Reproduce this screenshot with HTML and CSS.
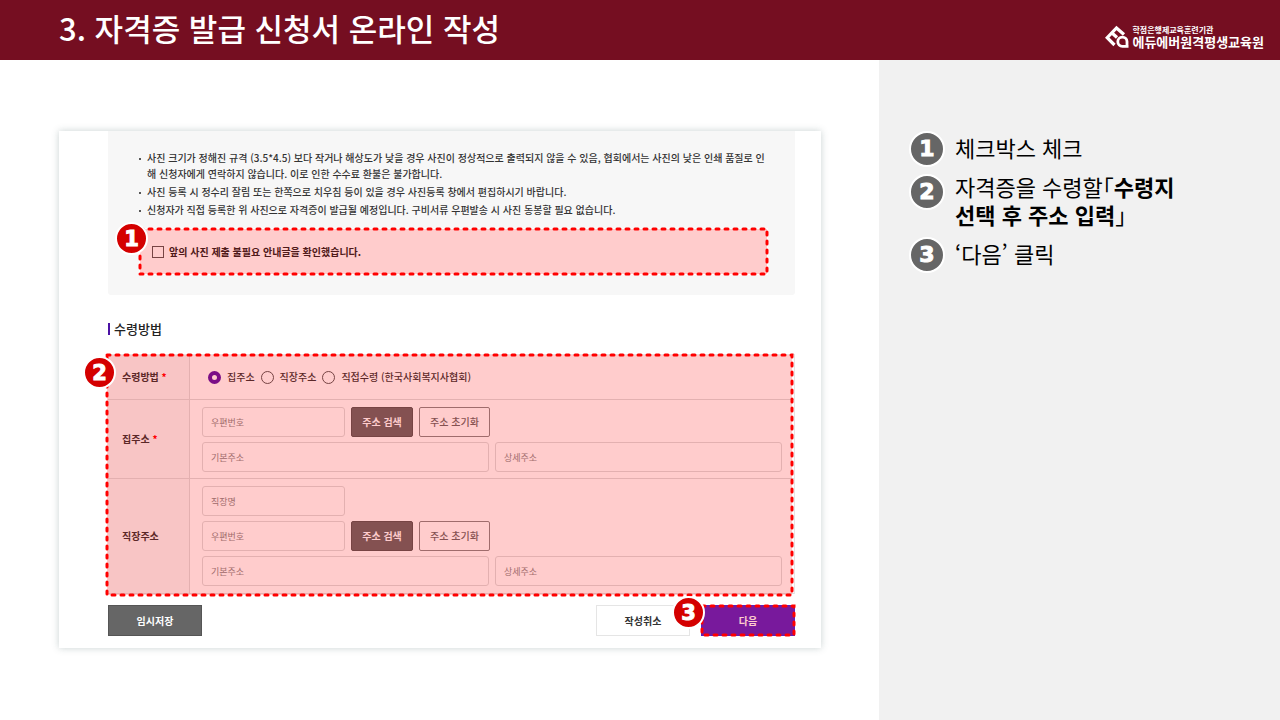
FILE: index.html
```html
<!DOCTYPE html>
<html lang="ko">
<head>
<meta charset="utf-8">
<meta name="viewport" content="width=device-width, initial-scale=1">
<title>자격증 발급 신청서 온라인 작성</title>
<link rel="stylesheet" href="styles.css">
</head>
<body>
<header class="topbar">
  <h1 class="title">3. 자격증 발급 신청서 온라인 작성</h1>
  <div class="brand">
    <svg class="brand-mark" viewBox="0 0 24 24" aria-hidden="true">
      <path d="M9.500 20 L2.200 12.700 L11.500 3 L19 9.500 M7 8 L12 12.500" fill="none" stroke="#fff" stroke-width="3.200"/>
      <path d="M22 22 V16.500 A4.600 4.600 0 1 0 17.400 21.300 H23.500" fill="none" stroke="#fff" stroke-width="2.800"/>
    </svg>
    <p class="brand-text"><span class="brand-sub">학점은행제교육훈련기관</span><span class="brand-name">에듀에버원격평생교육원</span></p>
  </div>
</header>
<div class="layout">
  <main class="stage">
    <form class="card">
      <section class="notice">
        <ul class="notes">
          <li>사진 크기가 정해진 규격 (3.5*4.5) 보다 작거나 해상도가 낮을 경우 사진이 정상적으로 출력되지 않을 수 있음, 협회에서는 사진의 낮은 인쇄 품질로 인해 신청자에게 연락하지 않습니다. 이로 인한 수수료 환불은 불가합니다.</li>
          <li>사진 등록 시 정수리 잘림 또는 한쪽으로 치우침 등이 있을 경우 사진등록 창에서 편집하시기 바랍니다.</li>
          <li>신청자가 직접 등록한 위 사진으로 자격증이 발급될 예정입니다. 구비서류 우편발송 시 사진 동봉할 필요 없습니다.</li>
        </ul>
        <div class="marked confirm">
          <input type="checkbox" id="agree" class="check"><label for="agree">앞의 사진 제출 불필요 안내글을 확인했습니다.</label>
          <svg class="outline" aria-hidden="true"><rect/></svg>
          <span class="badge badge-confirm">1</span>
        </div>
      </section>
      <h2 class="section-title">수령방법</h2>
      <div class="marked marked-table">
        <table class="fields">
          <tr>
            <th scope="row">수령방법 <span class="req">*</span></th>
            <td>
              <div class="radios">
                <input type="radio" name="way" id="home" checked><label for="home">집주소</label>
                <input type="radio" name="way" id="work"><label for="work">직장주소</label>
                <input type="radio" name="way" id="visit"><label for="visit">직접수령 (한국사회복지사협회)</label>
              </div>
            </td>
          </tr>
          <tr>
            <th scope="row">집주소 <span class="req">*</span></th>
            <td>
              <div class="stack">
                <div class="line"><input class="field short" type="text" placeholder="우편번호" aria-label="집 우편번호"><button type="button" class="btn-search">주소 검색</button><button type="button" class="btn-reset">주소 초기화</button></div>
                <div class="line"><input class="field" type="text" placeholder="기본주소" aria-label="집 기본주소"><input class="field" type="text" placeholder="상세주소" aria-label="집 상세주소"></div>
              </div>
            </td>
          </tr>
          <tr>
            <th scope="row">직장주소</th>
            <td>
              <div class="stack">
                <div class="line"><input class="field short" type="text" placeholder="직장명" aria-label="직장명"></div>
                <div class="line"><input class="field short" type="text" placeholder="우편번호" aria-label="직장 우편번호"><button type="button" class="btn-search">주소 검색</button><button type="button" class="btn-reset">주소 초기화</button></div>
                <div class="line"><input class="field" type="text" placeholder="기본주소" aria-label="직장 기본주소"><input class="field" type="text" placeholder="상세주소" aria-label="직장 상세주소"></div>
              </div>
            </td>
          </tr>
        </table>
        <svg class="outline outline-table" aria-hidden="true"><rect/></svg>
        <span class="badge badge-table">2</span>
      </div>
      <div class="actions">
        <button type="button" class="action save">임시저장</button>
        <button type="button" class="action cancel">작성취소</button>
        <div class="marked">
          <button type="submit" class="action next">다음</button>
          <svg class="outline" aria-hidden="true"><rect/></svg>
          <span class="badge badge-next">3</span>
        </div>
      </div>
    </form>
  </main>
  <aside class="guide">
    <ol class="steps">
      <li><span class="num">1</span><p>체크박스 체크</p></li>
      <li class="tall"><span class="num">2</span><p>자격증을 수령할「<b>수령지<br>선택 후 주소 입력</b>」</p></li>
      <li><span class="num">3</span><p>‘다음’ 클릭</p></li>
    </ol>
  </aside>
</div>
</body>
</html>
```
FILE: styles.css
```css
* { box-sizing: border-box; }
body {
  margin: 0;
  min-height: 100vh;
  display: flex;
  flex-direction: column;
  background: #fff;
  color: #333;
  font: 500 10px/16px "Noto Sans CJK KR", sans-serif;
}
h1, h2, p, ul, ol { margin: 0; padding: 0; }
ul, ol { list-style: none; }
input, button { font: inherit; margin: 0; }

.topbar {
  display: flex;
  align-items: flex-start;
  justify-content: space-between;
  height: 60px;
  padding: 0 16px 0 59px;
  background: #750e21;
  color: #fff;
}
.title { font-size: 31px; font-weight: 500; line-height: 56px; }
.brand { display: flex; align-items: center; gap: 3px; padding-top: 25px; }
.brand-mark { width: 24px; height: 24px; }
.brand-text { display: flex; flex-direction: column; font-weight: 700; }
.brand-sub { font-size: 8px; line-height: 10px; }
.brand-name { font-size: 13px; line-height: 14px; }

.layout { flex: 1; display: grid; grid-template-columns: 879fr 401fr; }
.stage { padding: 71px 58px 72px 59px; }
.card {
  padding: 0 26px 12px 49px;
  background: #fff;
  box-shadow: 0 0 7px rgba(60, 90, 90, .28);
}

.notice { padding: 19px 27px 20px 31px; background: #f7f7f7; border-radius: 0 0 3px 3px; }
.notes { display: grid; gap: 2px; padding-left: 8px; }
.notes li { position: relative; }
.notes li::before {
  content: "";
  position: absolute;
  left: -8px;
  top: 8px;
  width: 2px;
  height: 2px;
  border-radius: 50%;
  background: #222;
}

.marked { position: relative; }
.marked-table { padding-bottom: 2px; }
.outline {
  position: absolute;
  inset: 0;
  width: 100%;
  height: 100%;
  overflow: visible;
  pointer-events: none;
}
.outline rect {
  x: 1px;
  y: 1px;
  width: calc(100% - 2px);
  height: calc(100% - 2px);
  fill: rgba(255, 0, 0, .2);
  stroke: #f00;
  stroke-width: 3px;
  stroke-linecap: round;
  stroke-dasharray: 3 6;
}
.outline-table { left: -2px; }
.badge, .num {
  display: flex;
  align-items: center;
  justify-content: center;
  border: 2px solid #fff;
  border-radius: 50%;
  color: #fff;
  font-family: "DejaVu Sans", sans-serif;
  font-weight: 700;
  -webkit-text-stroke: 1px #fff;
}
.badge { position: absolute; width: 33px; height: 33px; background: #d40000; font-size: 21px; }
.badge-confirm { left: -24px; top: -6px; }
.badge-table { left: -25px; top: 2px; }
.badge-next { left: -29px; top: -9px; }

.confirm {
  display: flex;
  align-items: center;
  gap: 5px;
  height: 47px;
  margin-top: 10px;
  padding-left: 13px;
  background: #fff;
  color: #222;
  font-weight: 700;
}
.check { appearance: none; width: 12px; height: 12px; border: 1px solid #555; background: #fff; }

.section-title {
  margin: 24px 0 15px;
  display: flex;
  align-items: center;
  gap: 4px;
  color: #222;
  font-size: 13px;
  font-weight: 500;
  line-height: 20px;
}
.section-title::before { content: ""; width: 2px; height: 12px; background: #4b12a5; }

.fields { width: 100%; border-collapse: separate; border-spacing: 0; border: 1px solid #e5e5e5; border-width: 1px 1px 0 0; }
.fields th, .fields td { border-bottom: 1px solid #ddd; padding: 7px 12px 6px; }
.fields th { width: 82px; padding: 0 0 0 14px; border-right: 1px solid #ddd; background: #f7f7f7; text-align: left; font-weight: 700; }
.fields tr:first-child td { height: 45px; padding: 0 18px; }
.fields tr:last-child td { padding-bottom: 7px; }
.req { color: #f00; }
.radios, .line { display: flex; align-items: center; gap: 6px; }
.radios input { appearance: none; width: 13px; height: 13px; border: 1px solid #555; border-radius: 50%; background: #fff; }
.radios input:checked { border: 4px solid #5a12a8; }
.stack { display: grid; gap: 5px; }
.field {
  flex: 1;
  min-width: 0;
  height: 30px;
  padding: 0 8px;
  border: 1px solid #ddd;
  border-radius: 3px;
  background: #fff;
  font-size: 9px;
  font-weight: 400;
}
.field::placeholder { color: #888; opacity: 1; }
.short { flex: 0 0 143px; }
.btn-search, .btn-reset { height: 30px; padding: 0; border: 1px solid #888; border-radius: 2px; }
.btn-search { width: 62px; background: #666; border-color: #555; color: #fff; font-weight: 700; }
.btn-reset { width: 71px; background: #fff; color: #666; }

.actions { display: flex; gap: 11px; margin-top: 9px; }
.action { display: block; width: 94px; height: 31px; padding: 0; border: 1px solid #555; background: #666; color: #fff; font-weight: 700; }
.save { margin-right: auto; }
.cancel { border-color: #e5e5e5; background: #fff; color: #333; }
.next { border: 0; background: #5720c4; }

.guide { padding: 71px 30px 0; background: #f1f1f1; color: #000; }
.steps { display: grid; gap: 5px; }
.steps li { display: flex; align-items: center; gap: 10px; }
.steps p { padding-bottom: 4px; font-size: 22px; font-weight: 400; line-height: 28px; font-feature-settings: "halt"; }
.steps b { font-weight: 700; }
.num { flex: none; width: 36px; height: 36px; background: #666; font-size: 22px; }
.steps .tall { align-items: flex-start; }
.tall .num { margin-top: 2px; }
```
